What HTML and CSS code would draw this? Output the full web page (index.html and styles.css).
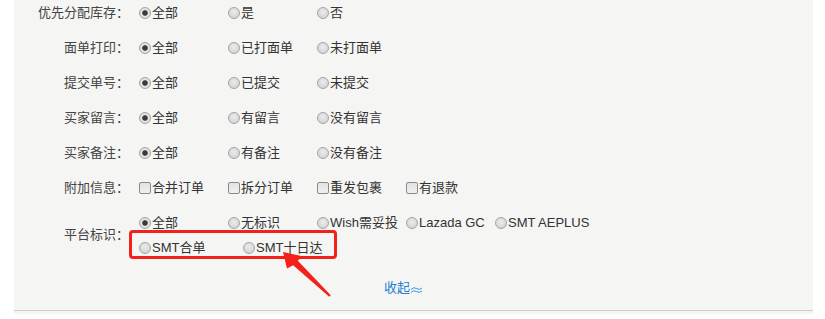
FILE: index.html
```html
<!DOCTYPE html>
<html lang="zh-CN">
<head>
<meta charset="utf-8">
<title>筛选条件</title>
<link rel="stylesheet" href="styles.css">
</head>
<body>
<div class="panel">
  <form class="filters">
    <div class="row">
      <span class="label">优先分配库存：</span>
      <div class="opts">
        <label class="opt"><input type="radio" name="r1" checked>全部</label>
        <label class="opt"><input type="radio" name="r1">是</label>
        <label class="opt"><input type="radio" name="r1">否</label>
      </div>
    </div>
    <div class="row">
      <span class="label">面单打印：</span>
      <div class="opts">
        <label class="opt"><input type="radio" name="r2" checked>全部</label>
        <label class="opt"><input type="radio" name="r2">已打面单</label>
        <label class="opt"><input type="radio" name="r2">未打面单</label>
      </div>
    </div>
    <div class="row">
      <span class="label">提交单号：</span>
      <div class="opts">
        <label class="opt"><input type="radio" name="r3" checked>全部</label>
        <label class="opt"><input type="radio" name="r3">已提交</label>
        <label class="opt"><input type="radio" name="r3">未提交</label>
      </div>
    </div>
    <div class="row">
      <span class="label">买家留言：</span>
      <div class="opts">
        <label class="opt"><input type="radio" name="r4" checked>全部</label>
        <label class="opt"><input type="radio" name="r4">有留言</label>
        <label class="opt"><input type="radio" name="r4">没有留言</label>
      </div>
    </div>
    <div class="row">
      <span class="label">买家备注：</span>
      <div class="opts">
        <label class="opt"><input type="radio" name="r5" checked>全部</label>
        <label class="opt"><input type="radio" name="r5">有备注</label>
        <label class="opt"><input type="radio" name="r5">没有备注</label>
      </div>
    </div>
    <div class="row">
      <span class="label">附加信息：</span>
      <div class="opts">
        <label class="opt"><input type="checkbox">合并订单</label>
        <label class="opt"><input type="checkbox">拆分订单</label>
        <label class="opt"><input type="checkbox">重发包裹</label>
        <label class="opt"><input type="checkbox">有退款</label>
      </div>
    </div>
    <div class="row row-multi">
      <span class="label">平台标识：</span>
      <div class="lines">
        <div class="opts line">
          <label class="opt"><input type="radio" name="r7" checked>全部</label>
          <label class="opt"><input type="radio" name="r7">无标识</label>
          <label class="opt"><input type="radio" name="r7">Wish需妥投</label>
          <label class="opt"><input type="radio" name="r7">Lazada GC</label>
          <label class="opt"><input type="radio" name="r7">SMT AEPLUS</label>
        </div>
        <div class="opts line line-extra">
          <label class="opt wide"><input type="radio" name="r7">SMT合单</label>
          <label class="opt"><input type="radio" name="r7">SMT十日达</label>
        </div>
      </div>
    </div>
    <div class="collapse">
      <a class="toggle" href="#">收起<svg class="toggle-icon" width="13" height="8" viewBox="0 0 13 8"><path d="M1 4.5 Q3.5 1.5 6.5 3.5 Q9.5 5.5 12 3" fill="none" stroke="#3a8fe2" stroke-width="1"/><path d="M1 7.5 Q3.5 4.5 6.5 6.5 Q9.5 8.5 12 6" fill="none" stroke="#3a8fe2" stroke-width="1"/></svg></a>
    </div>
  </form>
  <div class="highlight"></div>
  <svg class="arrow" width="799" height="319" viewBox="14 0 799 319">
    <polygon points="283,257 303.5,261.5 297.6,265.6 330.8,300.2 329.2,301.8 293.2,270.3 287,273.5" fill="#f3201c"/>
  </svg>
</div>
</body>
</html>
```
FILE: styles.css
```css
html, body {
  margin: 0;
  padding: 0;
  background: #ffffff;
}

body {
  font-family: "Liberation Sans", "Noto Sans CJK SC", sans-serif;
  font-size: 13px;
  color: #333333;
  overflow: hidden;
}

.panel {
  position: relative;
  margin-left: 14px;
  width: 799px;
  height: 319px;
  background: #f5f5f3;
}

.filters {
  margin: -5px 0 0 0;
  border-bottom: 1px solid #cccccc;
}

.row {
  display: flex;
  align-items: center;
  height: 35px;
}

.row-multi {
  height: auto;
  padding: 5px 0;
}

.label {
  width: 115px;
  flex: none;
  text-align: right;
  color: #444444;
  line-height: 20px;
}

.opts {
  display: flex;
  align-items: center;
  padding-left: 10px;
}

.line {
  height: 25px;
}

.opt {
  display: flex;
  align-items: center;
  width: 89px;
  flex: none;
  line-height: 20px;
  white-space: nowrap;
  cursor: pointer;
}

.opt.wide {
  width: 104px;
}

.opt input {
  -webkit-appearance: none;
  appearance: none;
  margin: 0 1px 0 0;
  width: 12px;
  height: 12px;
  box-sizing: border-box;
  flex: none;
  border: 1px solid #a4a4a4;
  background: radial-gradient(circle at 50% 40%, #ececec 0, #d6d6d6 70%);
}

.opt input[type="radio"] {
  border-radius: 50%;
}

.opt input[type="radio"]:checked {
  background: radial-gradient(circle, #3a3a3a 0, #3a3a3a 2.3px, #e4e4e4 3.2px, #d8d8d8 100%);
}

.opt input[type="checkbox"] {
  border-radius: 2px;
  border-color: #8a8a8a;
  background: linear-gradient(#e2e2e2, #f0f0f0);
}

.collapse {
  height: 45px;
  box-sizing: border-box;
  padding: 13px 20px 0 0;
  text-align: center;
}

.toggle {
  color: #1a7fd8;
  text-decoration: none;
  line-height: 20px;
}

.toggle-icon {
  vertical-align: -1px;
}

.highlight {
  position: absolute;
  left: 115px;
  top: 235px;
  width: 208px;
  height: 29px;
  box-sizing: border-box;
  border: 3px solid #f3201c;
  border-radius: 4px;
}

.arrow {
  position: absolute;
  left: 0;
  top: 0;
  pointer-events: none;
}
```
